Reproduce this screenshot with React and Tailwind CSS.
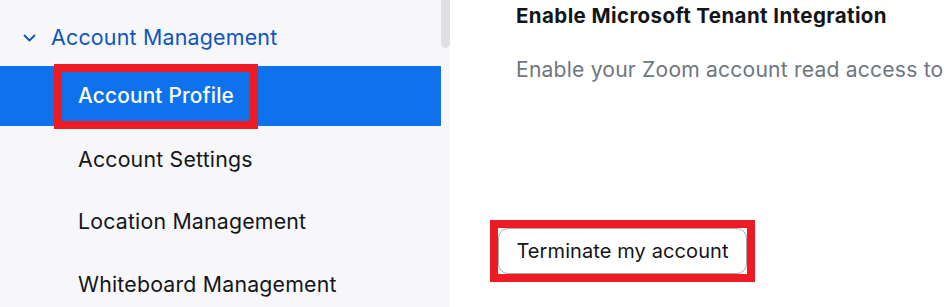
import React from 'react'

const items = ['Account Profile', 'Account Settings', 'Location Management', 'Whiteboard Management']

function Sidebar() {
  return (
    <aside className="relative w-[450px] h-full bg-[#f7f7fa] shrink-0">
      {/* scrollbar thumb */}
      <div className="absolute right-0 top-0 w-[9px] h-[48px] rounded-b-[5px] bg-[#e0e0e3]" />
      <div className="w-[441px]">
        <div className="h-[66px] pt-[9px] flex items-center pl-[23px] gap-[15px] text-[#0d55bd]">
          <svg width="13" height="8" viewBox="0 0 13 8" fill="none">
            <polyline points="1.5,1.5 6.5,6.5 11.5,1.5" stroke="currentColor" strokeWidth="1.8" strokeLinecap="round" strokeLinejoin="round" />
          </svg>
          <span className="text-[21.4px] tracking-[0.2px]">Account Management</span>
        </div>
        <ul className="flex flex-col gap-[2.67px]">
          {items.map((it, i) => (
            <li key={it} className={'h-[60px] flex items-center ' + (i === 0 ? 'bg-[#0e72ed] text-white font-medium pl-[62px]' : 'text-[#131619] pl-[78px] pt-[2px]')}>
              {i === 0 ? (
                <span className="h-[49px] flex items-center px-4 outline-8 outline-[#ed1c24] tracking-[0.2px] text-[20.8px]">{it}</span>
              ) : (
                <span className="text-[21.3px] tracking-[0.2px]">{it}</span>
              )}
            </li>
          ))}
        </ul>
      </div>
    </aside>
  )
}

export default function App() {
  return (
    <div className="w-[951px] h-[307px] flex overflow-hidden bg-white" style={{ fontFamily: 'Inter, "Open Sans", sans-serif' }}>
      <Sidebar />
      <main className="flex-1 pl-[66px] pt-[3px] whitespace-nowrap overflow-hidden">
        <h2 className="text-[20.5px] font-bold text-[#131619] leading-[26px] tracking-[0.4px]">Enable Microsoft Tenant Integration</h2>
        <p className="mt-[26px] text-[21.1px] leading-[30px] text-[#6e7680] tracking-[0.2px]">Enable your Zoom account read access to</p>
        <div className="mt-[135px] ml-[-26px] inline-flex border-8 border-[#ed1c24]">
          <button className="h-[46px] w-[249px] rounded-[10px] border border-[#a5a9b0] bg-white text-[20px] text-[#131619] tracking-[0.1px]">
            Terminate my account
          </button>
        </div>
      </main>
    </div>
  )
}
